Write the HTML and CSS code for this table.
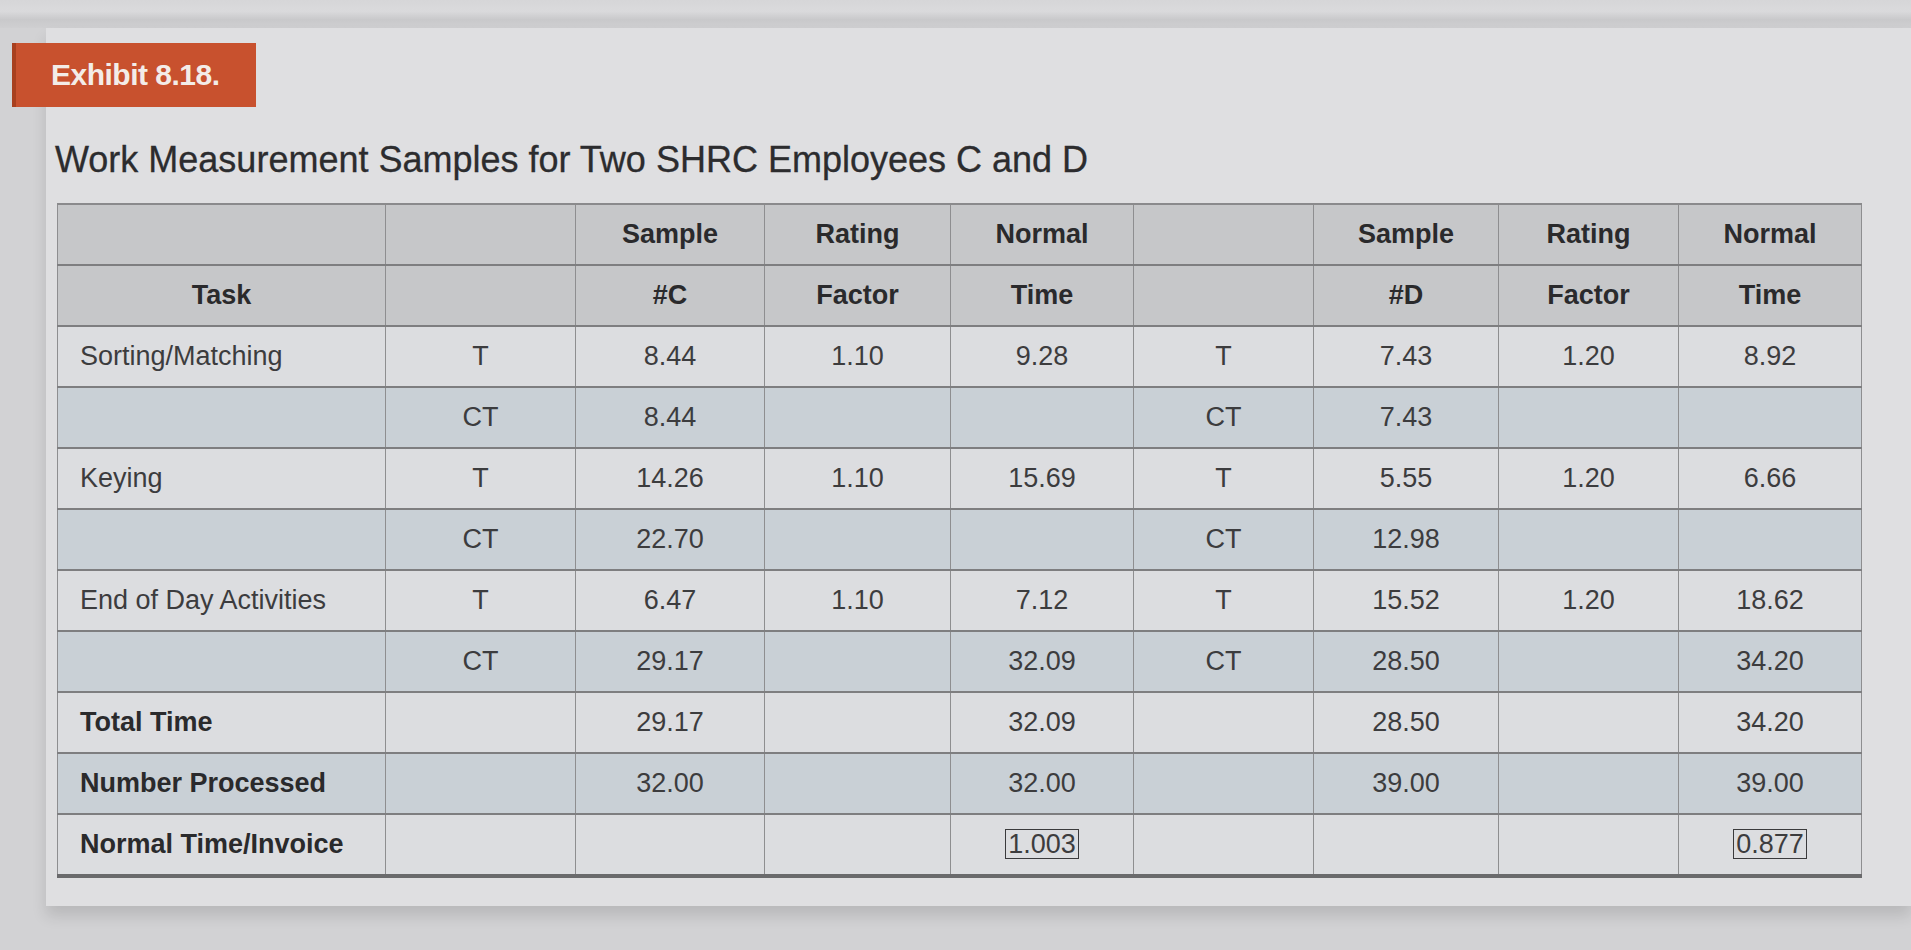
FILE: index.html
```html
<!DOCTYPE html>
<html lang="en">
<head>
<meta charset="utf-8">
<title>Exhibit 8.18</title>
<link rel="stylesheet" href="styles.css">
</head>
<body>
<div class="topband"></div>
<div class="panel">
  <div class="badge">Exhibit 8.18.</div>
  <h1 class="title">Work Measurement Samples for Two SHRC Employees C and D</h1>
  <table class="grid">
    <colgroup>
      <col class="c-task"><col class="c-a"><col class="c-b"><col class="c-c"><col class="c-d"><col class="c-e"><col class="c-f"><col class="c-g"><col class="c-h">
    </colgroup>
    <thead>
      <tr class="hrow">
        <th></th><th></th><th>Sample</th><th>Rating</th><th>Normal</th><th></th><th>Sample</th><th>Rating</th><th>Normal</th>
      </tr>
      <tr class="hrow">
        <th>Task</th><th></th><th>#C</th><th>Factor</th><th>Time</th><th></th><th>#D</th><th>Factor</th><th>Time</th>
      </tr>
    </thead>
    <tbody>
      <tr class="light">
        <td class="task">Sorting/Matching</td><td>T</td><td>8.44</td><td>1.10</td><td>9.28</td><td>T</td><td>7.43</td><td>1.20</td><td>8.92</td>
      </tr>
      <tr class="blue">
        <td class="task"></td><td>CT</td><td>8.44</td><td></td><td></td><td>CT</td><td>7.43</td><td></td><td></td>
      </tr>
      <tr class="light">
        <td class="task">Keying</td><td>T</td><td>14.26</td><td>1.10</td><td>15.69</td><td>T</td><td>5.55</td><td>1.20</td><td>6.66</td>
      </tr>
      <tr class="blue">
        <td class="task"></td><td>CT</td><td>22.70</td><td></td><td></td><td>CT</td><td>12.98</td><td></td><td></td>
      </tr>
      <tr class="light">
        <td class="task">End of Day Activities</td><td>T</td><td>6.47</td><td>1.10</td><td>7.12</td><td>T</td><td>15.52</td><td>1.20</td><td>18.62</td>
      </tr>
      <tr class="blue">
        <td class="task"></td><td>CT</td><td>29.17</td><td></td><td>32.09</td><td>CT</td><td>28.50</td><td></td><td>34.20</td>
      </tr>
      <tr class="light">
        <td class="task strong">Total Time</td><td></td><td>29.17</td><td></td><td>32.09</td><td></td><td>28.50</td><td></td><td>34.20</td>
      </tr>
      <tr class="blue">
        <td class="task strong">Number Processed</td><td></td><td>32.00</td><td></td><td>32.00</td><td></td><td>39.00</td><td></td><td>39.00</td>
      </tr>
      <tr class="light last">
        <td class="task strong">Normal Time/Invoice</td><td></td><td></td><td></td><td><span class="boxed">1.003</span></td><td></td><td></td><td></td><td><span class="boxed">0.877</span></td>
      </tr>
    </tbody>
  </table>
</div>
</body>
</html>
```

FILE: styles.css
```css
html, body {
  margin: 0;
  padding: 0;
}
body {
  background: #d2d2d4;
  font-family: "Liberation Sans", Arial, sans-serif;
  color: #3c3c3e;
  height: 950px;
  overflow: hidden;
}
.topband {
  height: 28px;
  background: linear-gradient(#d6d6d8 0, #dadadc 40%, #c9c9cb 70%, #cfcfd1 100%);
}
.panel {
  margin-left: 46px;
  height: 878px;
  padding-top: 15px;
  box-sizing: border-box;
  background: #dfdfe1;
  box-shadow: 0 10px 14px rgba(0, 0, 0, 0.12);
}
.badge {
  margin-left: -34px;
  width: 244px;
  height: 64px;
  box-sizing: border-box;
  padding-left: 35px;
  display: flex;
  align-items: center;
  background: #c8512e;
  border-left: 4px solid #a8401f;
  color: #f3ece8;
  font-weight: bold;
  font-size: 30px;
  letter-spacing: -0.5px;
}
.title {
  margin: 31px 0 21px 9px;
  font-size: 36px;
  line-height: 44px;
  font-weight: normal;
  color: #2c2c2e;
  -webkit-text-stroke: 0.3px #2c2c2e;
}
.grid {
  margin-left: 11px;
  border-collapse: collapse;
  table-layout: fixed;
  width: 1804px;
  font-size: 27px;
  border-top: 2px solid #8a8a8c;
}
.c-task { width: 328px; }
.c-a { width: 190px; }
.c-b { width: 189px; }
.c-c { width: 186px; }
.c-d { width: 183px; }
.c-e { width: 180px; }
.c-f { width: 185px; }
.c-g { width: 180px; }
.c-h { width: 183px; }
.grid th, .grid td {
  height: 59px;
  padding: 0;
  text-align: center;
  vertical-align: middle;
  border-left: 1px solid #8e8e90;
  border-right: 1px solid #8e8e90;
  border-bottom: 2px solid #7e7e80;
}
.grid th {
  background: #c6c7c9;
  font-weight: bold;
  color: #2a2a2c;
}
.light td {
  background: #dcdde0;
}
.blue td {
  background: #c9d0d6;
}
.grid td.task {
  text-align: left;
  padding-left: 22px;
}
.grid td.strong {
  font-weight: bold;
  color: #2a2a2c;
}
.last td {
  border-bottom: 4px solid #6a6a6c;
}
.boxed {
  display: inline-block;
  border: 1.5px solid #3a3a3c;
  padding: 0 2px;
  line-height: 28px;
}
```
